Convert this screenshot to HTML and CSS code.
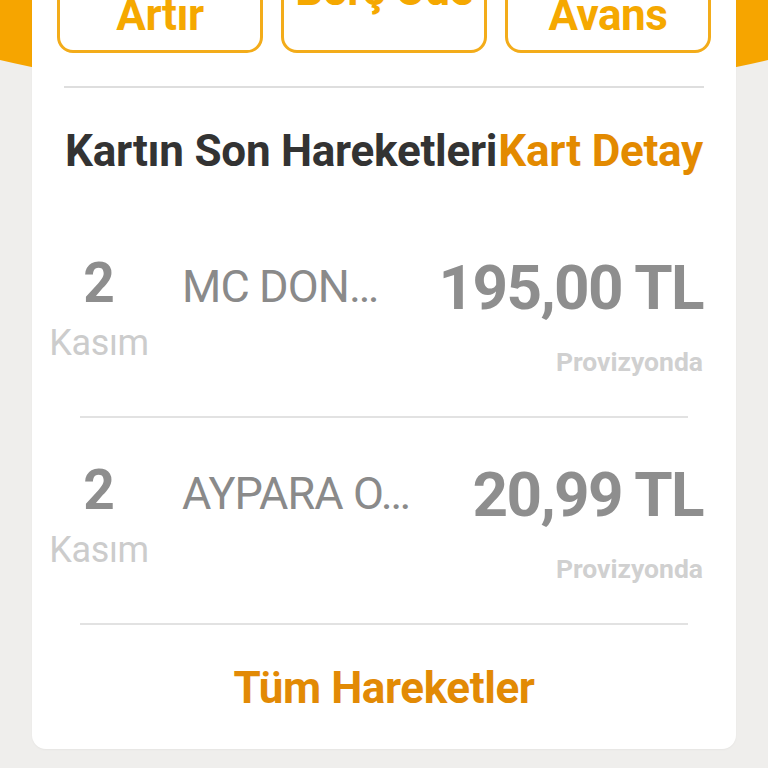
FILE: index.html
```html
<!DOCTYPE html>
<html lang="tr">
<head>
<meta charset="utf-8">
<title>Kart</title>
<link rel="stylesheet" href="styles.css">
</head>
<body>
<div class="page">
  <div class="band"></div>
  <main class="card">
    <div class="actions">
      <div class="action"><span>Limit</span><span>Artır</span></div>
      <div class="action"><span>Borç Öde</span></div>
      <div class="action"><span>Nakit</span><span>Avans</span></div>
    </div>
    <div class="rule"></div>
    <div class="head">
      <h2 class="head-title">Kartın Son Hareketleri</h2>
      <a class="head-link">Kart Detay</a>
    </div>
    <ul class="tx-list">
      <li class="tx">
        <div class="tx-date"><span class="tx-day">2</span><span class="tx-month">Kasım</span></div>
        <div class="tx-name">MC DON…</div>
        <div class="tx-amt"><span class="tx-sum">195,00 TL</span><span class="tx-status">Provizyonda</span></div>
      </li>
      <li class="sep"></li>
      <li class="tx">
        <div class="tx-date"><span class="tx-day">2</span><span class="tx-month">Kasım</span></div>
        <div class="tx-name">AYPARA O…</div>
        <div class="tx-amt"><span class="tx-sum">20,99 TL</span><span class="tx-status">Provizyonda</span></div>
      </li>
      <li class="sep"></li>
    </ul>
    <a class="all">Tüm Hareketler</a>
  </main>
</div>
</body>
</html>
```
FILE: styles.css
```css
* { box-sizing: border-box; margin: 0; padding: 0; }
html, body { height: 100%; }
body {
  background: #efeeec;
  font-family: Roboto, "Noto Sans", sans-serif;
  overflow: hidden;
}
.band {
  height: 100px;
  background: #f6a500;
  clip-path: ellipse(500px 100px at 50% -4px);
}
.card {
  margin: -193px 32px 0;
  background: #fff;
  border-radius: 14px;
  padding: 20px 0 35px;
  position: relative;
  box-shadow: 0 1px 2px rgba(0,0,0,0.04);
}
.actions {
  display: flex;
  gap: 18px;
  padding: 0 25px;
}
.action {
  flex: 1;
  height: 126px;
  border: 3px solid #f3ac1a;
  border-radius: 16px;
  background: #fff;
  color: #f5a800;
  font-weight: 700;
  font-size: 44px;
  line-height: 50px;
  letter-spacing: -0.5px;
  display: flex;
  flex-direction: column;
  justify-content: center;
  align-items: center;
}
.rule {
  height: 2px;
  background: #dedede;
  margin: 33px 32px 0;
}
.head {
  display: flex;
  justify-content: space-between;
  margin: 37px 33px 0;
  font-weight: 700;
  font-size: 44px;
  line-height: 52px;
  letter-spacing: -0.25px;
  white-space: nowrap;
}
.head-title { font: inherit; color: #333333; }
.head-link { color: #e38a00; }
.tx-list { list-style: none; margin-top: 76px; }
.tx {
  display: flex;
  align-items: flex-start;
  padding: 0 33px 0 16px;
}
.tx-date {
  width: 102px;
  display: flex;
  flex-direction: column;
  align-items: center;
}
.tx-day {
  font-weight: 700;
  font-size: 55px;
  line-height: 60px;
  color: #8e8e8e;
}
.tx-month {
  font-size: 36px;
  line-height: 44px;
  color: #cccccc;
  margin-top: 8px;
  letter-spacing: -0.3px;
}
.tx-name {
  flex: 1;
  margin: 8px 0 0 32px;
  font-size: 45px;
  line-height: 52px;
  letter-spacing: -0.9px;
  color: #8a8a8a;
  white-space: nowrap;
}
.tx-amt {
  display: flex;
  flex-direction: column;
  align-items: flex-end;
}
.tx-sum {
  font-weight: 700;
  font-size: 62px;
  line-height: 70px;
  letter-spacing: -1.6px;
  color: #8e8e8e;
  white-space: nowrap;
}
.tx-status {
  margin-top: 23px;
  font-weight: 700;
  font-size: 26.5px;
  line-height: 32px;
  color: #d0d0d0;
}
.sep {
  height: 2px;
  background: #e2e2e2;
  margin: 38px 48px 42px;
}
.sep:last-child { margin-bottom: 0; }
.all {
  display: block;
  text-align: center;
  margin-top: 37px;
  font-weight: 700;
  font-size: 44px;
  line-height: 52px;
  letter-spacing: -0.4px;
  color: #e28a05;
}
```
